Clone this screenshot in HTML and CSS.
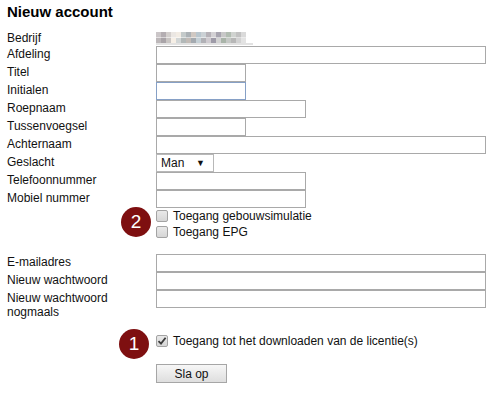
FILE: index.html
```html
<!DOCTYPE html>
<html lang="nl">

<head>
    <meta charset="UTF-8">
    <meta name="viewport" content="width=device-width, initial-scale=1.0">
    <title>Nieuw account</title>
    <link rel="stylesheet" href="styles.css">
</head>

<body>
    <h1 class="page-title">Nieuw account</h1>
    <form class="account-form">
        <div class="form-row row-company">
            <span class="form-label">Bedrijf</span>
            <span class="company-value" aria-label="bedrijfsnaam"></span>
        </div>
        <div class="form-row">
            <label class="form-label" for="afdeling">Afdeling</label>
            <input class="field field-wide" id="afdeling" type="text">
        </div>
        <div class="form-row">
            <label class="form-label" for="titel">Titel</label>
            <input class="field field-small" id="titel" type="text">
        </div>
        <div class="form-row">
            <label class="form-label" for="initialen">Initialen</label>
            <input class="field field-small is-focused" id="initialen" type="text">
        </div>
        <div class="form-row">
            <label class="form-label" for="roepnaam">Roepnaam</label>
            <input class="field field-medium" id="roepnaam" type="text">
        </div>
        <div class="form-row">
            <label class="form-label" for="tussenvoegsel">Tussenvoegsel</label>
            <input class="field field-small" id="tussenvoegsel" type="text">
        </div>
        <div class="form-row">
            <label class="form-label" for="achternaam">Achternaam</label>
            <input class="field field-wide" id="achternaam" type="text">
        </div>
        <div class="form-row">
            <label class="form-label" for="geslacht">Geslacht</label>
            <span class="select-wrap">
                <select class="select-field" id="geslacht">
                    <option>Man</option>
                    <option>Vrouw</option>
                </select>
            </span>
        </div>
        <div class="form-row">
            <label class="form-label" for="telefoon">Telefoonnummer</label>
            <input class="field field-medium" id="telefoon" type="text">
        </div>
        <div class="form-row">
            <label class="form-label" for="mobiel">Mobiel nummer</label>
            <input class="field field-medium" id="mobiel" type="text">
        </div>

        <div class="check-group">
            <span class="badge badge-two">2</span>
            <label class="check-row">
                <span class="check-box"></span>
                Toegang gebouwsimulatie
            </label>
            <label class="check-row">
                <span class="check-box"></span>
                Toegang EPG
            </label>
        </div>

        <div class="form-row row-email">
            <label class="form-label" for="email">E-mailadres</label>
            <input class="field field-wide" id="email" type="text">
        </div>
        <div class="form-row">
            <label class="form-label" for="wachtwoord">Nieuw wachtwoord</label>
            <input class="field field-wide" id="wachtwoord" type="password">
        </div>
        <div class="form-row">
            <label class="form-label" for="wachtwoord2">Nieuw wachtwoord nogmaals</label>
            <input class="field field-wide" id="wachtwoord2" type="password">
        </div>

        <div class="check-group group-license">
            <span class="badge badge-one">1</span>
            <label class="check-row">
                <span class="check-box is-checked">
                    <svg width="10" height="10" viewBox="0 0 10 10">
                        <path d="M1.5 5.2 L4 7.6 L8.6 1.8" fill="none" stroke="#3c3c3c" stroke-width="1.8" />
                    </svg>
                </span>
                Toegang tot het downloaden van de licentie(s)
            </label>
        </div>

        <div class="form-actions">
            <button class="save-btn" type="button">Sla op</button>
        </div>
    </form>
</body>

</html>
```

FILE: styles.css
```css
body {
    margin: 0;
    padding: 3px 7px;
    font-family: 'Liberation Sans', Arial, sans-serif;
    font-size: 12px;
    line-height: 14px;
    color: #111;
    background: #fff;
}

.page-title {
    margin: 0;
    font-size: 15px;
    line-height: 17px;
    font-weight: bold;
    color: #000;
}

.account-form {
    width: 480px;
}

.form-row {
    display: flex;
    align-items: flex-start;
    min-height: 18px;
}

.form-label {
    flex: 0 0 149px;
    width: 149px;
    padding-top: 1px;
}

/* company name is blurred in the screenshot */
.row-company {
    min-height: 16px;
    margin-top: 10px;
}

.company-value {
    display: block;
    width: 97px;
    height: 11px;
    margin-top: 2px;
    border-bottom: 2px solid #e2e2e2;
    background:
        linear-gradient(90deg, #cbc6c8 0 5px, #b4aeb2 5px 10px, #d3cfcd 10px 15px, #ebe7e3 15px 20px, #f2ece4 20px 25px, #c4caca 25px 30px, #acb2b6 30px 35px, #d0c8c2 35px 40px, #b9c6ce 40px 45px, #cbd1d5 45px 50px, #b6b2b8 50px 55px, #d3d1d4 55px 60px, #a8a5b0 60px 65px, #c8c8c8 65px 70px, #b2bdb2 70px 75px, #d0d3d0 75px 80px, #c2c2c2 80px 85px, #dadada 85px 90px, #fff 90px) top left / 100% 50% no-repeat,
        linear-gradient(90deg, #bdb8ba 0 5px, #a9a4a8 5px 10px, #c9c5c3 10px 15px, #f6efe6 15px 20px, #d2d6d6 20px 25px, #b2b8b8 25px 30px, #c2bbb6 30px 35px, #a4aab0 35px 40px, #c5d0d6 40px 45px, #b1b1b6 45px 50px, #cfcbd0 50px 55px, #9e9ba8 55px 60px, #d2d2d2 60px 65px, #a9b4a9 65px 70px, #c5c8c5 70px 75px, #b7b7b7 75px 80px, #d2d2d2 80px 85px, #e3e3e3 85px 90px, #fff 90px) bottom left / 100% 50% no-repeat;
}

.field {
    box-sizing: border-box;
    height: 18px;
    margin: 0;
    padding: 0 3px;
    border: 1px solid #a9a9a9;
    border-radius: 0;
    font: inherit;
    background: #fff;
    outline: none;
}

.field.is-focused {
    border-color: #86a0c6;
}

.field-wide {
    width: 330px;
}

.field-medium {
    width: 150px;
}

.field-small {
    width: 90px;
}

.select-wrap {
    position: relative;
    display: block;
}

.select-wrap::after {
    content: "\25BC";
    position: absolute;
    right: 9px;
    top: 2px;
    font-size: 9px;
    color: #111;
    pointer-events: none;
}

.select-field {
    box-sizing: border-box;
    width: 58px;
    height: 18px;
    margin: 0;
    padding: 0 4px;
    border: 1px solid #b8b8b8;
    border-radius: 0;
    background: #fff;
    font: inherit;
    color: #111;
    appearance: none;
    -webkit-appearance: none;
}

/* checkbox groups */
.check-group {
    position: relative;
    padding-left: 149px;
}

.check-row {
    display: flex;
    align-items: center;
    gap: 5px;
    height: 16px;
}

.check-box {
    box-sizing: border-box;
    display: flex;
    align-items: center;
    justify-content: center;
    width: 12px;
    height: 12px;
    border: 1px solid #a3a3a3;
    border-radius: 2px;
    background: linear-gradient(#e9e9e9, #d6d6d6);
}

.group-license {
    margin-top: 14px;
}

.badge {
    position: absolute;
    width: 30px;
    height: 30px;
    border-radius: 50%;
    background: #7e0f10;
    color: #fff;
    font-size: 19px;
    line-height: 30px;
    text-align: center;
}

.badge-two {
    left: 114px;
    top: -1px;
}

.badge-one {
    left: 112px;
    top: -4px;
}

.row-email {
    margin-top: 14px;
}

.form-actions {
    padding-left: 149px;
    margin-top: 15px;
}

.save-btn {
    box-sizing: border-box;
    width: 71px;
    height: 19px;
    margin: 0;
    padding: 0;
    border: 1px solid #a6a6a6;
    border-radius: 0;
    background: linear-gradient(#f7f7f7, #dedede);
    font: inherit;
    color: #111;
}
```
